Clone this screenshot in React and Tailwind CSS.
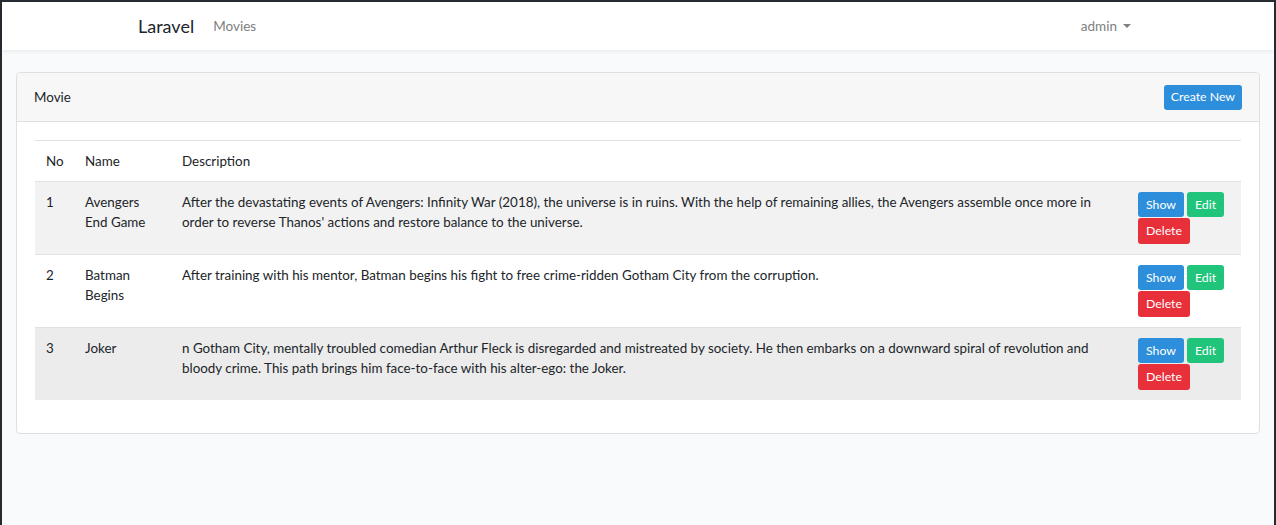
const movies = [
    {
        no: 1,
        name: "Avengers End Game",
        description: "After the devastating events of Avengers: Infinity War (2018), the universe is in ruins. With the help of remaining allies, the Avengers assemble once more in order to reverse Thanos' actions and restore balance to the universe.",
    },
    {
        no: 2,
        name: "Batman Begins",
        description: "After training with his mentor, Batman begins his fight to free crime-ridden Gotham City from the corruption.",
    },
    {
        no: 3,
        name: "Joker",
        description: "n Gotham City, mentally troubled comedian Arthur Fleck is disregarded and mistreated by society. He then embarks on a downward spiral of revolution and bloody crime. This path brings him face-to-face with his alter-ego: the Joker.",
    },
]

const rowBg = ["bg-[#f2f2f2]", "bg-white", "bg-[#ececec]"]

const btn = "px-[8px] rounded-[3px] text-white text-[12.3px]"

const App = () => {
    return (
        <div className="min-h-[525px] bg-[#f8fafc] border-2 border-b-0 border-[#262a31] text-[#212529] font-['Lato',sans-serif]">

            {/* Navbar */}
            <nav className="h-[48px] bg-white shadow-[0_2px_4px_rgba(0,0,0,0.06)]">
                <div className="mx-auto max-w-[1030px] px-[15px] h-full flex items-center">
                    <span className="text-[18px] mr-[19px]">Laravel</span>
                    <span className="text-[13.5px] text-[#808080]">Movies</span>
                    <div className="ml-auto flex items-center gap-[6px] mr-[7px] text-[13.5px] text-[#808080]">
                        admin
                        <span className="w-0 h-0 border-x-[4px] border-x-transparent border-t-[4px] border-t-[#808080]" />
                    </div>
                </div>
            </nav>

            {/* Content */}
            <main className="px-[14px] py-[22px]">
                <div className="bg-white border border-[#dfdfdf] rounded-[4px]">
                    <div className="h-[49px] pl-[17px] pr-[17px] flex items-center justify-between bg-[#f7f7f7] border-b border-[#dfdfdf] rounded-t-[4px]">
                        <span className="text-[13.4px]">Movie</span>
                        <button className="h-[25px] px-[7px] rounded-[3px] bg-[#2d8fdb] text-white text-[12.3px]">
                            Create New
                        </button>
                    </div>

                    <div className="p-[18px] pb-[33px]">
                        <table className="w-full table-fixed border-collapse text-[13.4px] leading-[20px]">
                            <colgroup>
                                <col className="w-[38px]" />
                                <col className="w-[97px]" />
                                <col />
                                <col className="w-[115px]" />
                            </colgroup>
                            <thead>
                                <tr className="border-t border-b border-[#dee2e6]">
                                    <th className="text-left font-normal px-[11px] py-[10px]">No</th>
                                    <th className="text-left font-normal px-[12px] py-[10px]">Name</th>
                                    <th className="text-left font-normal px-[12px] py-[10px]">Description</th>
                                    <th className="px-[12px] py-[10px]"></th>
                                </tr>
                            </thead>
                            <tbody>
                                {movies.map((m, i) => (
                                    <tr key={m.no} className={`border-t border-[#dee2e6] align-top ${rowBg[i]}`}>
                                        <td className="px-[11px] py-[10px]">{m.no}</td>
                                        <td className="px-[12px] py-[10px]">{m.name}</td>
                                        <td className="px-[12px] py-[10px] pr-[24px]">{m.description}</td>
                                        <td className="pl-[12px] pr-[10px] pt-[10px] pb-[10px]">
                                            <div className="flex flex-wrap gap-x-[3px] gap-y-[1px] w-[92px]">
                                                <button className={`${btn} h-[25px] bg-[#2d8fdb]`}>Show</button>
                                                <button className={`${btn} h-[25px] bg-[#21c47b]`}>Edit</button>
                                                <button className={`${btn} h-[26px] bg-[#e8303a]`}>Delete</button>
                                            </div>
                                        </td>
                                    </tr>
                                ))}
                            </tbody>
                        </table>
                    </div>
                </div>
            </main>
        </div>
    )
}

export default App
